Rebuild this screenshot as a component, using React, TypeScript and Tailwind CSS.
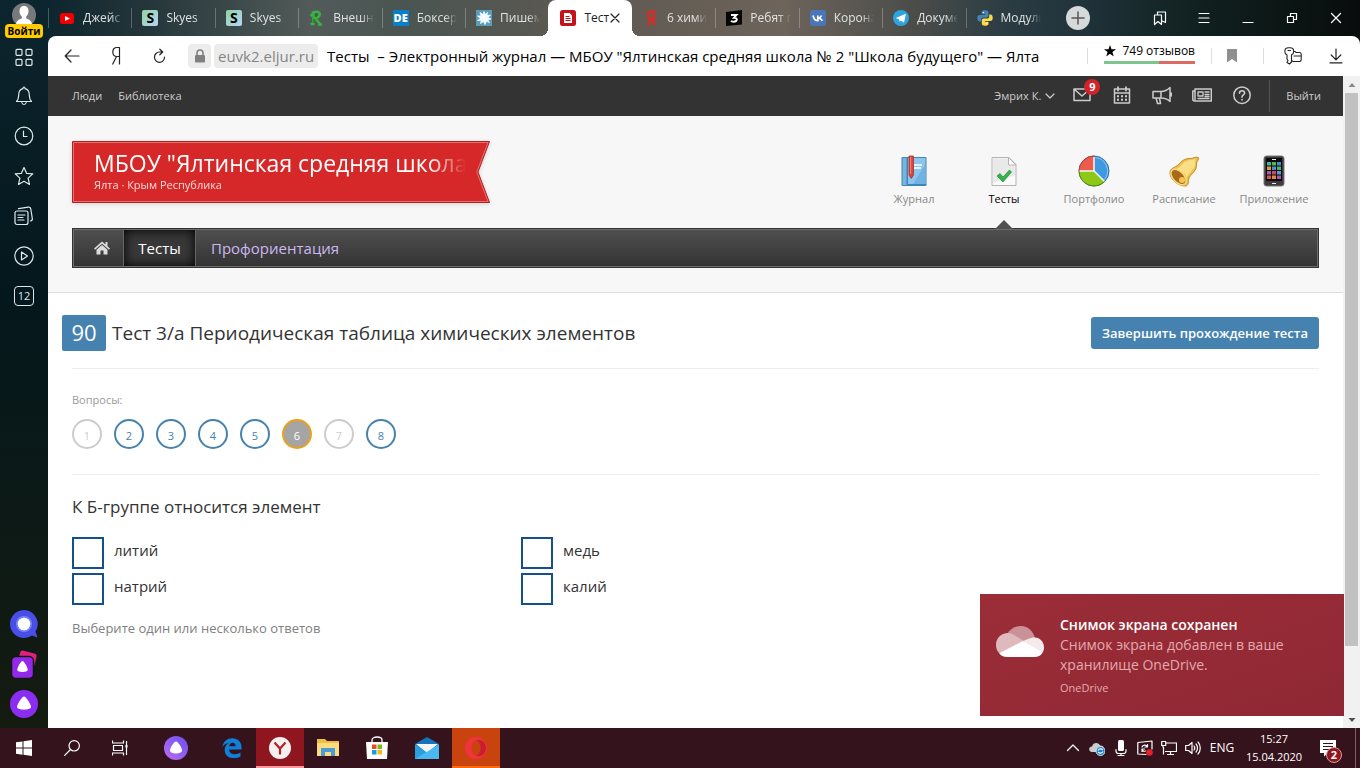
import type { ReactNode } from "react";

type IconProps = { size?: number; box?: string; children: ReactNode; className?: string };

function Line({ size = 20, box, children, className = "" }: IconProps) {
  return (
    <svg
      width={size}
      height={size}
      viewBox={box ?? `0 0 ${size} ${size}`}
      fill="none"
      stroke="currentColor"
      strokeWidth="1.2"
      strokeLinecap="round"
      strokeLinejoin="round"
      aria-hidden="true"
      className={`shrink-0 ${className}`}
    >
      {children}
    </svg>
  );
}

function Art({ size = 16, box, children, className = "" }: IconProps) {
  return (
    <svg width={size} height={size} viewBox={box ?? `0 0 ${size} ${size}`} aria-hidden="true" className={`shrink-0 ${className}`}>
      {children}
    </svg>
  );
}

const skyesIcon = (
  <span className="flex size-4 shrink-0 items-center justify-center rounded-xs bg-linear-to-br from-[#8fd4a0] to-[#b9d3f5] text-sm font-bold leading-4 text-black">S</span>
);

const tabs: { title: string; icon: ReactNode; active?: boolean }[] = [
  {
    title: "Джейс",
    icon: (
      <Art>
        <rect x="1" y="3" width="14" height="11" rx="2.5" fill="#f00000" />
        <path d="M6 6l5 2.500-5 2.500z" fill="#fff" />
      </Art>
    ),
  },
  { title: "Skyes", icon: skyesIcon },
  { title: "Skyes", icon: skyesIcon },
  {
    title: "Внешн",
    icon: (
      <Art>
        <path d="M4.500 14.500V3M3 3c5-2.500 8.500-1 7.500 2.300-.6 2-3 2.500-5 2.500M6.500 8.500l4.500 5.500M1.500 14h4M9 14.500h4M1.500 6l2-2" fill="none" stroke="#3cb043" strokeWidth="2.600" />
        <path d="M7 4v3M5 9v4" stroke="#1c6e26" strokeWidth="1.200" />
      </Art>
    ),
  },
  {
    title: "Боксер",
    icon: <span className="flex size-4 shrink-0 items-center justify-center bg-[#0a7fc9] text-[11px] font-extrabold leading-4 text-white">DE</span>,
  },
  {
    title: "Пишем",
    icon: (
      <Art>
        <rect width="16" height="16" fill="#5b9db8" />
        <path d="M8 1.500l1 3 2.500-2-.5 3 3.500-.5-2.500 2.500 3 1.500-3.200.7 1.700 3-3-1.400L9 14.500l-1.500-3-3 2 .8-3.200-3.800.2 3-2L1.500 6l3.500 0-1-3.500 3 2z" fill="#f4fbff" stroke="#f4fbff" strokeWidth=".8" />
      </Art>
    ),
  },
  {
    title: "Тест",
    active: true,
    icon: (
      <Art>
        <rect width="16" height="16" rx="2.500" fill="#c4141b" />
        <path d="M4 3h5.500L12 5.500V13H4z" fill="#fff" />
        <path d="M5.500 6.500h4M5.500 8.500h5M5.500 10.500h5" stroke="#c4141b" />
      </Art>
    ),
  },
  {
    title: "6 хими",
    icon: (
      <Art>
        <path d="M11 15.500V1.300H8.800C6 1.300 4.800 3 4.800 5s1.200 3.800 3.700 3.800H11M8.200 9l-3.600 6.500" fill="none" stroke="#e52620" strokeWidth="2.200" />
      </Art>
    ),
  },
  {
    title: "Ребят п",
    icon: (
      <Art>
        <path d="M0 2l16-2v14.500L0 16z" fill="#050505" />
        <path d="M5 5h5.500L8 7.700c4 0 3.500 4-.3 4-1.200 0-2.200-.3-2.700-.8" fill="none" stroke="#fff" strokeWidth="1.900" />
      </Art>
    ),
  },
  {
    title: "Корона",
    icon: (
      <Art>
        <rect width="16" height="16" rx="2.500" fill="#4a76b8" />
        <path d="M3 5.500c.8 3.500 2.300 5.200 4.800 5.200V5.500M8 8c2-.2 3-1.200 3.600-2.500M8.200 8c2 .1 3.200 1.300 4.300 2.700" fill="none" stroke="#fff" strokeWidth="1.700" />
      </Art>
    ),
  },
  {
    title: "Докуме",
    icon: (
      <Art>
        <circle cx="8" cy="8" r="8" fill="#2ca5dc" />
        <path d="M2.800 7.900l9.300-3.800c.5-.1.700.2.600.6l-1.500 7.300c-.1.500-.5.600-.9.300L7.900 10.500l-1.300 1.300-.4-2.400z" fill="#fff" />
      </Art>
    ),
  },
  {
    title: "Модуль",
    icon: (
      <Art>
        <path d="M8 .3c-3 0-3.300 1.200-3.300 2.200v1.700h3.500v.7H3C1.200 4.900.3 6 .3 8.200s1 3.200 2.300 3.200h1.500V9.600c0-1.300 1-2.200 2.200-2.200h3.500c1 0 1.700-.8 1.700-1.800V2.500C11.500 1 10.200.3 8 .3z" fill="#4483b8" />
        <path d="M8.200 15.700c3 0 3.300-1.200 3.300-2.200v-1.700H8v-.7h5.200c1.800 0 2.500-1.100 2.500-3.300s-1-3.200-2.300-3.200h-1.200v1.800c0 1.300-1 2.200-2.200 2.200H6.500c-1 0-1.700.8-1.700 1.800v3.100c0 1.500 1.200 2.200 3.400 2.200z" fill="#ffd845" />
        <circle cx="6.300" cy="2.500" r=".7" fill="#fff" />
        <circle cx="9.900" cy="13.500" r=".7" fill="#fff" />
      </Art>
    ),
  },
];

function Tabs() {
  return (
    <div role="tablist" className="grid h-9 min-w-0 flex-1 grid-cols-12">
      {tabs.map((tab, i) => {
        const divider = i > 0 && tabs[i - 1].active ? "border-transparent" : "border-white/25";
        return (
          <div
            key={i}
            role="tab"
            aria-selected={!!tab.active}
            className={
              tab.active
                ? "relative flex h-9 min-w-0 items-center rounded-t-lg bg-white px-3 text-[#222] before:absolute before:-left-2 before:bottom-0 before:size-2 before:bg-[radial-gradient(circle_at_0_0,transparent_8px,white_8px)] after:absolute after:-right-2 after:bottom-0 after:size-2 after:bg-[radial-gradient(circle_at_100%_0,transparent_8px,white_8px)]"
                : "flex h-9 min-w-0 items-center pr-2 text-[#dfe2e2]"
            }
          >
            {!tab.active && <span className={`mr-[10px] h-5 shrink-0 border-l ${divider}`} />}
            {tab.icon}
            <span className={`ml-2 min-w-0 flex-1 whitespace-nowrap text-xs leading-5 ${tab.active ? "" : "mask-r-from-70%"}`}>{tab.title}</span>
            {tab.active && (
              <button aria-label="Закрыть вкладку">
                <Line size={10}>
                  <path d="M1 1l8 8M9 1l-8 8" />
                </Line>
              </button>
            )}
          </div>
        );
      })}
    </div>
  );
}

function WindowControls() {
  return (
    <div className="flex w-[311px] shrink-0 items-center text-white">
      <button aria-label="Новая вкладка" className="ml-[17px] mr-12 flex size-6 items-center justify-center rounded-full bg-[#d5d9da] text-[#555]">
        <Line size={14}>
          <path d="M7 1v12M1 7h12" strokeWidth="1.500" />
        </Line>
      </button>
      <button aria-label="Коллекции" className="flex h-9 w-11 items-center justify-center">
        <Line size={16}>
          <path d="M2.500 5h7v9.500L6 11.500l-3.500 3zM5.500 5V2h8v10.500l-3.500-1.500" />
        </Line>
      </button>
      <button aria-label="Меню" className="flex h-9 w-11 items-center justify-center">
        <Line size={12}>
          <path d="M1 1.500h10M1 6h10M1 10.500h10" />
        </Line>
      </button>
      <button aria-label="Свернуть" className="flex h-9 w-11 items-center justify-center">
        <Line size={12}>
          <path d="M1 10.500h10" />
        </Line>
      </button>
      <button aria-label="Восстановить" className="flex h-9 w-11 items-center justify-center">
        <Line size={12}>
          <path d="M1.500 4.500h6v6h-6zM4.500 4.500v-3h6v6h-3" />
        </Line>
      </button>
      <button aria-label="Закрыть" className="flex h-9 w-11 items-center justify-center">
        <Line size={12}>
          <path d="M1.500 1.500l9 9M10.500 1.500l-9 9" />
        </Line>
      </button>
    </div>
  );
}

function AddressBar() {
  return (
    <div className="flex h-10 shrink-0 items-center rounded-t-lg bg-white pl-4 text-[#222]">
      <button aria-label="Назад" className="flex w-4 justify-center">
        <Line size={16}>
          <path d="M15 8H1.500M7 2L1.200 8 7 14" />
        </Line>
      </button>
      <button aria-label="Яндекс" className="ml-7 flex w-4 justify-center">
        <Line size={20}>
          <path d="M13.500 18.500v-17h-2.500C8 1.500 6.800 3.500 6.800 6s1.200 4.500 4.200 4.500h2.500M10.500 10.500l-4 8" strokeLinecap="butt" />
        </Line>
      </button>
      <button aria-label="Обновить" className="ml-[27px] flex w-4 justify-center">
        <Line size={16}>
          <path d="M11.500 4H8.500a5 5.200 0 1 0 5 5.200M8.800 1.200l2.900 2.800-2.900 2.800" />
        </Line>
      </button>
      <button aria-label="Защищённое соединение" className="ml-[21px] flex h-6 w-[23px] items-center justify-center rounded bg-[#ececec]">
        <Art size={14}>
          <path d="M4 6.500V4a3 3 0 0 1 6 0v2.500" fill="none" stroke="#808080" strokeWidth="1.600" />
          <rect x="2" y="6" width="10" height="7.500" rx="1" fill="#808080" />
        </Art>
      </button>
      <a href="#site" className="ml-[3px] flex h-6 items-center rounded bg-[#ececec] px-1 text-[15px] leading-6 text-[#858585]">
        euvk2.eljur.ru
      </a>
      <button className="ml-[9px] min-w-0 flex-1 whitespace-pre text-left text-[15px] leading-6 text-black">
        {'Тесты  – Электронный журнал — МБОУ "Ялтинская средняя школа № 2 "Школа будущего" — Ялта'}
      </button>
      <div className="ml-4 flex shrink-0 items-center">
        <span className="h-4 border-l border-[#ddd]" />
        <a href="#reviews" className="ml-4 w-[91px] whitespace-nowrap pb-[5px] text-xs leading-4 text-black">
          <span className="flex items-center justify-between">
            <Art size={12}>
              <path d="M6 0l1.500 4.200H12L8.400 6.900l1.400 4.500L6 8.700l-3.800 2.700 1.400-4.500L0 4.200h4.500z" />
            </Art>
            749 отзывов
          </span>
          <span className="mt-0.5 flex h-[3px]">
            <span className="w-3/5 bg-[#7dc58d]" />
            <span className="w-2/5 bg-[#dd6a63]" />
          </span>
        </a>
        <span className="ml-4 h-4 border-l border-[#ddd]" />
        <button aria-label="Закладка" className="ml-[13px]">
          <Art size={14}>
            <path d="M2 0h10v13.500L7 10l-5 3.500z" fill="#8f8f8f" />
          </Art>
        </button>
        <span className="ml-6 h-4 border-l border-[#ddd]" />
        <button aria-label="Пароли" className="ml-5">
          <Line size={18}>
            <path d="M3 8C1.500 7.200.8 6 .8 4.300.8 2 2 .8 4.500.8H6c2.500 0 3.700 1.300 3.700 3.500 0 1.700-.8 3-2.200 3.700v7L5.500 17 3 15.500l1-2-1-1.500zM4 3.500h2.500M9.700 4.500h1c.8 0 1 .5 1.300 1h3.300c1.200 0 1.900.6 1.900 1.700v5.600c0 1.100-.6 1.700-1.700 1.700H9.500c-1.200 0-2-.6-2-1.700M10 9H17" strokeWidth="1.100" />
          </Line>
        </button>
        <button aria-label="Загрузки" className="ml-[26px] mr-4">
          <Line size={16}>
            <path d="M8 1v10.500M3.200 7L8 11.800 12.800 7M2 14.800h12" />
          </Line>
        </button>
      </div>
    </div>
  );
}

const sideItems: { label: string; icon: ReactNode }[] = [
  { label: "Табло", icon: <path d="M1.500 3a1 1 0 0 1 1-1h4a1 1 0 0 1 1 1v4a1 1 0 0 1-1 1h-4a1 1 0 0 1-1-1zM11.500 3a1 1 0 0 1 1-1h4a1 1 0 0 1 1 1v4a1 1 0 0 1-1 1h-4a1 1 0 0 1-1-1zM1.500 13a1 1 0 0 1 1-1h4a1 1 0 0 1 1 1v4a1 1 0 0 1-1 1h-4a1 1 0 0 1-1-1zM11.500 13a1 1 0 0 1 1-1h4a1 1 0 0 1 1 1v4a1 1 0 0 1-1 1h-4a1 1 0 0 1-1-1z" transform="translate(.5 1.3)" /> },
  { label: "Уведомления", icon: <path d="M2.500 15.500c2-2 2.200-3.500 2.200-6.500 0-3.500 2-5.800 4.300-6.300C9 1.500 9.400 1 10 1s1 .5 1 1.700c2.300.5 4.300 2.800 4.300 6.300 0 3 .2 4.500 2.200 6.500zM7.800 16.500c.3 1.500 1.100 2 2.200 2s1.900-.5 2.200-2" /> },
  { label: "История", icon: <><circle cx="10" cy="10" r="8.800" /><path d="M9.500 5v5.500H13" /></> },
  { label: "Избранное", icon: <path d="M10 1.500l2.600 5.800 6.200.6-4.700 4.200 1.400 6.300L10 15.200l-5.500 3.200 1.400-6.300L1.200 7.900l6.200-.6z" /> },
  { label: "Коллекции", icon: <><rect x="1" y="5" width="13" height="13.500" rx="2" /><path d="M4.500 2.600l9.800-1.400c1.500-.2 2.200.5 2.500 1.800l1.500 9.500c.2 1.200-.4 2.200-1.800 2.500M4 9h7M4 11.500h5M4 14h6" /></> },
  { label: "Видео", icon: <><circle cx="10" cy="10" r="9.200" /><path d="M7.500 6v8l6-4z" /></> },
];

function Sidebar() {
  return (
    <aside className="flex w-12 shrink-0 flex-col items-center bg-linear-to-b from-[#0d252e] via-[#04171c] via-40% to-[#141b10] text-[#dfe9ea]">
      <button className="flex h-9 shrink-0 flex-col items-center pt-[3px]">
        <Art size={24} className="-mb-[3px]">
          <circle cx="12" cy="12" r="12" fill="#77797b" />
          <path d="M12 3c-3 0-4.500 2-4.500 5 0 2.500.9 4.500 2.300 5.500v2C7.500 16.500 5 17 4 20.500 6 23 9 24 12 24s6-1 8-3.500c-1-3.500-3.500-4-5.800-5v-2c1.400-1 2.300-3 2.300-5.500 0-3-1.500-5-4.500-5z" fill="#fff" />
        </Art>
        <span className="z-10 rounded bg-[#fc0] px-[3px] text-[10px] font-bold leading-[14px] text-black">Войти</span>
      </button>
      {sideItems.map((item) => (
        <button key={item.label} aria-label={item.label} className="flex h-10 w-12 shrink-0 items-center justify-center">
          <Line size={20}>{item.icon}</Line>
        </button>
      ))}
      <button className="mt-[10px] flex size-5 shrink-0 items-center justify-center rounded border border-[#dfe9ea] text-[11px] leading-4">12</button>
      <div className="flex-1" />
      <button aria-label="Мессенджер" className="flex h-10 shrink-0 items-center">
        <Art size={28}>
          <path d="M14 0a14 14 0 1 0 8 25.500l5.500 2-2-6A14 14 0 0 0 14 0z" fill="#4a4ee8" />
          <circle cx="14" cy="14" r="8" fill="#8aa4ff" opacity=".65" />
          <circle cx="14" cy="14" r="6.300" fill="#fff" />
        </Art>
      </button>
      <button aria-label="Сервисы" className="flex h-10 shrink-0 items-center">
        <Art size={28}>
          <rect x="9" y="2" width="17" height="14" rx="3" fill="#e0207f" transform="rotate(14 18 8)" />
          <rect x="1.500" y="6.500" width="22" height="22" rx="4.500" fill="#9328ea" stroke="#10170f" strokeWidth="1.5" />
          <path d="M12.500 11c1.500 0 5.300 6.500 5.300 9s-10.600 2.500-10.600 0S11 11 12.500 11z" fill="#fff" />
        </Art>
      </button>
      <button aria-label="Алиса" className="mb-1 flex h-10 shrink-0 items-center">
        <Art size={28}>
          <circle cx="14" cy="14" r="14" fill="#8b2df0" />
          <path d="M14 6.500c2 0 7 8 7 10.500 0 3.500-14 3.500-14 0 0-2.500 5-10.500 7-10.500z" fill="#fff" />
        </Art>
      </button>
    </aside>
  );
}

function SiteTopBar() {
  return (
    <div className="flex h-10 items-center bg-[#333] pl-6 pr-[22px] text-[11px] leading-4 text-[#ccc]">
      <a href="#people">Люди</a>
      <a href="#library" className="ml-4">Библиотека</a>
      <div className="flex-1" />
      <button className="flex items-center gap-1">
        Эмрих К.
        <Line size={10}>
          <path d="M1 3l4 4 4-4" />
        </Line>
      </button>
      <a href="#mail" aria-label="Сообщения: 9" className="relative ml-[17px]">
        <Line size={20}>
          <path d="M2 3h16v11.500H2zM2.500 3.500L10 10l7.500-6.500" strokeWidth="1.500" />
        </Line>
        <span className="absolute -top-[7px] left-3 flex size-4 items-center justify-center rounded-full bg-[#d2232a] text-[11px] font-bold text-white">9</span>
      </a>
      <a href="#calendar" aria-label="Календарь" className="ml-5">
        <Line size={20}>
          <path d="M2.500 3h15v14h-15zM2.500 7h15" strokeWidth="1.500" />
          <path d="M6 1.200V4.500M14 1.200V4.500" strokeWidth="1.800" />
          <path d="M5 10.300h10M5 13.700h10" strokeDasharray="2 2" strokeLinecap="butt" strokeWidth="2" />
        </Line>
      </a>
      <a href="#news" aria-label="Объявления" className="ml-5">
        <Line size={20}>
          <path d="M1 5.500h8c4 0 7-2 9-4v14c-2-2-5-3.500-9-3.500H1zM9 5.500V12M4 12l1.500 5.500h3l-1-5.500M19.300 7v3" strokeWidth="1.500" />
        </Line>
      </a>
      <a href="#feed" aria-label="Новости" className="ml-5">
        <Line size={20}>
          <path d="M3 3h16.300v12H2.500C1 15 .8 14 .8 13V5H3zM3 5v8.500" strokeWidth="1.500" />
          <path d="M6 6h5v4H6zM13 6h4M13 8.500h4M6 12.500h11M13 10.500h4" strokeWidth="1.300" />
        </Line>
      </a>
      <a href="#help" aria-label="Помощь" className="ml-5">
        <Line size={20}>
          <circle cx="10" cy="9.200" r="8.200" strokeWidth="1.500" />
          <path d="M7.500 7.200c0-1.800 1.200-2.500 2.500-2.500s2.600.7 2.600 2.300c0 2-2.600 2-2.600 4.200M10 13.500v.4" strokeWidth="1.600" />
        </Line>
      </a>
      <span className="ml-[17px] h-8 border-l border-[#555]" />
      <a href="#logout" className="ml-4">Выйти</a>
    </div>
  );
}

const sections: { label: string; active?: boolean; icon: ReactNode }[] = [
  {
    label: "Журнал",
    icon: (
      <>
        <rect x="3.500" y="2" width="25" height="29" rx="1" fill="#3f86b8" />
        <rect x="4.500" y="3" width="4" height="27" fill="#78b4dc" />
        <rect x="10" y="3" width="17.500" height="26" fill="#8cc6ee" />
        <path d="M15 29L27.500 9v20z" fill="#72b2e2" />
        <path d="M16 10h8M16 13h7" stroke="#fff" strokeWidth="1.500" />
        <path d="M11 1h4.500v19l-2.200 3.500L11 20z" fill="#de4138" stroke="#a92a2a" strokeWidth=".7" />
        <path d="M12.700 2v17" stroke="#f58b7d" />
      </>
    ),
  },
  {
    label: "Тесты",
    active: true,
    icon: (
      <>
        <path d="M4 2.500h17l7 7v21H4z" fill="#fafafa" stroke="#b4b4b4" />
        <path d="M5 3.500h15v7h7v10L5 28z" fill="#e9e9e9" />
        <path d="M20.500 2.500v7.500H28z" fill="#fff" stroke="#b4b4b4" />
        <path d="M9 21l3-2.500 3 3.500 6.500-7 2 2L15 27z" fill="#35b24a" stroke="#239236" strokeWidth=".7" />
      </>
    ),
  },
  {
    label: "Портфолио",
    icon: (
      <>
        <circle cx="16" cy="16" r="15" fill="#3d9ade" stroke="#2c6fa8" />
        <path d="M16 16V1A15 15 0 0 0 1 16z" fill="#ec5b4c" stroke="#b33c36" />
        <path d="M16 16H1a15 15 0 0 0 25.600 10.600z" fill="#8cc815" stroke="#57870d" />
        <path d="M16 2v14l10.300 10.300M16 16H1.500" stroke="#fff" strokeWidth="1.500" fill="none" />
        <path d="M17.500 2.500a13.500 13.500 0 0 1 9 22" stroke="#91cdf6" fill="none" />
      </>
    ),
  },
  {
    label: "Расписание",
    icon: (
      <>
        <path d="M30.500 2.500c-3-.8-4 0-7 1-5-.5-9 1.500-12 5C9 11.500 6 12 3.500 14c-2 2-2 5-.5 8 2.500 5 8 8.500 13.500 9 3 .2 4-2 4-5.500 0-4 3.500-6 6-9.500s2-6 2-8c.5-1.500 2-3 2-5.500z" fill="#efc04c" stroke="#bd8b23" />
        <path d="M27.500 4.500C20 4 15 7.500 12.500 11c-1 1.500-3 2.500-4.500 3.500 6 1 10 5 11 8.500 1-5 7-8 8-13z" fill="#fbdf86" />
        <ellipse cx="10.500" cy="22" rx="5.500" ry="9.300" transform="rotate(-44 10.500 22)" fill="#a96b1b" stroke="#f6d981" strokeWidth="1.500" />
        <circle cx="14" cy="25" r="3" fill="#f2c554" />
      </>
    ),
  },
  {
    label: "Приложение",
    icon: (
      <>
        <rect x="6" y="1" width="20" height="30" rx="2.500" fill="#3c3c3c" stroke="#777" />
        <rect x="8" y="3" width="16" height="23" fill="#0c0c0c" />
        <path d="M14 4.500h4M14 28.500h4" stroke="#eee" />
        {["#4bb3a5", "#56b44e", "#3a91d0", "#d2a433", "#4b8fd1", "#46b66a", "#a35bc0", "#d0485b", "#5a9ad8", "#d5574d", "#e68937", "#a855b5"].map((color, i) => (
          <rect key={i} x={9 + (i % 3) * 5} y={7 + Math.floor(i / 3) * 4.5} width="4" height="3.5" fill={color} />
        ))}
      </>
    ),
  },
];

function SiteHeader() {
  return (
    <header className="border-b border-[#ddd] bg-[#f7f7f7] px-6 pb-6 pt-[25px]">
      <div className="flex items-start justify-between">
        <a href="#school" className="relative block h-[62px] w-[418px] pl-[22px] pt-2 text-white drop-shadow-sm">
          <svg className="absolute inset-0 size-full" viewBox="0 0 418 62" preserveAspectRatio="none" aria-hidden="true">
            <path d="M.5.500h417L406 31l11.500 30.500H.5z" fill="#d62828" stroke="#ae2227" />
            <path d="M1.500 1.500h414.500L404.800 31 416 60.500H1.500z" fill="none" stroke="#e57070" />
          </svg>
          <span className="relative block w-[372px] whitespace-nowrap text-[23px] leading-7 mask-r-from-90%">МБОУ "Ялтинская средняя школа</span>
          <span className="relative block text-[11px] leading-4 text-[#ffd9d9]">Ялта · Крым Республика</span>
        </a>
        <nav className="flex h-[87px] pt-[14px] text-[11px] leading-4 text-[#888]">
          {sections.map((s) => (
            <a key={s.label} href="#section" className={`relative flex w-[90px] flex-col items-center ${s.active ? "text-black" : ""}`}>
              <Art size={32}>{s.icon}</Art>
              <span className="mt-1">{s.label}</span>
              {s.active && (
                <Art size={18} className="absolute -bottom-[10px] z-10">
                  <path d="M0 9l9-9 9 9z" fill="#505050" />
                </Art>
              )}
            </a>
          ))}
        </nav>
      </div>
      <nav className="flex h-10 items-stretch border border-[#333] bg-linear-to-b from-[#505050] to-[#333] text-[15px] leading-5 text-white inset-ring inset-ring-[#6c6c6c]">
        <a href="#home" aria-label="Главная" className="flex w-[51px] items-center justify-center border-r border-[#666] pl-2 text-[#ddd]">
          <Art size={16}>
            <path d="M8 1.500L0 8.500l1 1.200 7-6 7 6 1-1.200-2.500-2.200V2h-2v2.500z" fill="currentColor" />
            <path d="M8 5l-5.500 4.700v4.800h4v-4h3v4h4V9.700z" fill="currentColor" />
          </Art>
        </a>
        <a href="#tests" className="my-px flex w-[72px] items-center justify-center border-r border-[#666] bg-[#383838] inset-shadow-[0_0_12px_#000]">Тесты</a>
        <a href="#career" className="ml-[15px] flex items-center text-[#ccb8f2]">Профориентация</a>
      </nav>
    </header>
  );
}

const questions = [1, 2, 3, 4, 5, 6, 7, 8];
const answers = ["литий", "медь", "натрий", "калий"];

function questionStyle(n: number) {
  if (n === 6) return "border-[#e8a317] bg-[#a5a5a5] text-white";
  if (n === 1 || n === 7) return "border-[#ccc] text-[#ccc]";
  return "border-[#4682ae] text-[#4682ae]";
}

function TestPage() {
  return (
    <main className="px-6 text-[#333]">
      <div className="flex h-[76px] items-center border-b border-[#eee] pt-1">
        <span className="-ml-[10px] flex h-9 w-11 items-center justify-center rounded-xs bg-[#4682b0] text-[22px] text-white">90</span>
        <h1 className="ml-[6px] flex-1 whitespace-nowrap text-[19px] leading-6">Тест 3/а Периодическая таблица химических элементов</h1>
        <button className="h-8 w-[228px] rounded-[3px] bg-[#4682b0] text-[13px] font-semibold leading-5 text-white">Завершить прохождение теста</button>
      </div>
      <section className="border-b border-[#eee] pb-[25px] pt-[23px]">
        <p className="text-[11px] leading-4 text-[#999]">Вопросы:</p>
        <div className="mt-[11px] flex gap-3">
          {questions.map((n) => (
            <button key={n} className={`flex size-[30px] items-center justify-center rounded-full border-2 pt-1 text-[11px] leading-4 ${questionStyle(n)}`}>
              {n}
            </button>
          ))}
        </div>
      </section>
      <fieldset aria-labelledby="question" className="pt-5">
        <h2 id="question" className="text-[17px] leading-6">К Б-группе относится элемент</h2>
        <div className="mt-[18px] grid grid-cols-[449px_1fr] gap-y-1">
          {answers.map((a) => (
            <label key={a} className="flex h-8 gap-[10px] text-[15px] leading-[26px]">
              <input type="checkbox" className="size-8 appearance-none border-2 border-[#154f8c] bg-white" />
              {a}
            </label>
          ))}
        </div>
        <p className="mt-[13px] text-[13px] leading-5 text-[#808080]">Выберите один или несколько ответов</p>
      </fieldset>
    </main>
  );
}

function Scrollbar() {
  return (
    <div className="flex w-[17px] shrink-0 flex-col items-center bg-[#f1f1f1]" aria-hidden="true">
      <Art size={16}>
        <path d="M4.500 11L8 7l3.500 4z" fill="#8a8a8a" />
      </Art>
      <div className="mt-px w-[13px] grow-[552] bg-[#c1c1c1]" />
      <div className="grow-[66]" />
      <Art size={16}>
        <path d="M4.500 6L8 10l3.500-4z" fill="#505050" />
      </Art>
    </div>
  );
}

function Toast() {
  return (
    <div role="status" className="absolute bottom-3 right-4 flex h-[122px] w-[364px] bg-linear-to-br from-[#9b2d37] to-[#8f2834] pl-4 pt-[21px] text-[#e5a9ae]">
      <svg width="48" height="32" viewBox="0 0 48 32" aria-hidden="true" className="mt-[11px] shrink-0">
        <path d="M11 8C14 3 19 0 25 0c7 0 12 5 14 12l-12 4z" fill="#cb9198" />
        <path d="M12 7C5 7 0 12 0 19c0 3 1 6 3 8l25-12-10-6c-2-1.300-4-2-6-2z" fill="#dfb9bd" />
        <path d="M3 27l24-12 13 3 8 3c0 6-4 10-9 10H11c-3.500 0-6.500-1.500-8-4z" fill="#fff" />
        <path d="M27 15l5-2c2-.9 4-1.500 7-1.500 5 0 9 4.500 9 9.500L46 26z" fill="#f6e9ea" />
      </svg>
      <div className="ml-4 text-sm leading-5">
        <p className="font-semibold text-white">Снимок экрана сохранен</p>
        <p className="w-[250px]">Снимок экрана добавлен в ваше хранилище OneDrive.</p>
        <p className="mt-[5px] text-[11px] leading-4">OneDrive</p>
      </div>
    </div>
  );
}

function Taskbar() {
  return (
    <footer className="flex h-10 shrink-0 items-stretch bg-[#35131c] text-white">
      <button aria-label="Пуск" className="flex w-12 items-center justify-center">
        <Art size={16}>
          <path d="M0 2.300L6.500 1.400v6.200H0zM7.500 1.200L16 0v7.600H7.500zM0 8.500h6.500v6.200L0 13.800zM7.500 8.500H16V16l-8.500-1.200z" fill="#fff" />
        </Art>
      </button>
      <button aria-label="Поиск" className="flex w-12 items-center justify-center">
        <Line size={16}>
          <circle cx="10.200" cy="5.800" r="5.200" />
          <path d="M6.500 9.500L.7 15.300" />
        </Line>
      </button>
      <button aria-label="Представление задач" className="flex w-12 items-center justify-center">
        <Line size={16}>
          <path d="M.5.500v2.500h11V.5M.5 15.500V13h11v2.500M1.500 5.500h9v5h-9zM14.500 1v14" strokeLinecap="butt" />
          <path d="M13.500 5h2v2.500h-2z" fill="#fff" stroke="none" />
        </Line>
      </button>
      <button aria-label="Алиса" className="flex w-16 items-center justify-center">
        <Art size={24}>
          <defs>
            <linearGradient id="alice" x1="0" y1="1" x2="1" y2="0">
              <stop offset="0" stopColor="#c26cf2" />
              <stop offset="1" stopColor="#6450ef" />
            </linearGradient>
          </defs>
          <circle cx="12" cy="12" r="12" fill="url(#alice)" />
          <path d="M12 5.500c2 0 6 6.300 6 9 0 4-12 4-12 0 0-2.700 4-9 6-9z" fill="#fff" />
        </Art>
      </button>
      <button aria-label="Edge" className="flex w-12 items-center justify-center">
        <Art size={20}>
          <path d="M.5 9C1.300 3.500 5 .3 10.300.3c5.500 0 9.200 3.700 9.200 9v2.200H7c.2 3 2.300 4.700 5.800 4.700 2.200 0 4-.6 5.700-1.600v4c-2 1.100-4 1.500-6.500 1.500-6 0-9.300-3.300-9.300-8.400 0-3.200 1.800-5.700 4.500-7C4.500 5 2 6.500.5 9zm6.700-.7h6.500C13.600 6 12.500 4.800 10.600 4.800S7.600 6.100 7.200 8.300z" fill="#0f80d8" />
        </Art>
      </button>
      <button aria-label="Яндекс.Браузер" className="flex w-12 items-center justify-center border-b-2 border-[#f79a9f] bg-[#8f151e] pt-0.5">
        <Art size={22}>
          <circle cx="11" cy="11" r="11" fill="#f3f0ef" />
          <path d="M5.500 5.500l5.500 6 5.500-6M11 11v6.500" fill="none" stroke="#b5202a" strokeWidth="2.200" />
        </Art>
      </button>
      <button aria-label="Проводник" className="flex w-12 items-center justify-center">
        <Art size={22}>
          <path d="M0 2h8l2 2h12v15H0z" fill="#f0bc42" />
          <path d="M0 6h22v13H0z" fill="#fbdc81" />
          <path d="M4 19v-8h14v8h-4v-4H8v4z" fill="#4c9bd4" />
        </Art>
      </button>
      <button aria-label="Магазин" className="flex w-[50px] items-center justify-center">
        <Art size={24}>
          <path d="M7 7V4c0-4 10-4 10 0v3" fill="none" stroke="#fff" strokeWidth="1.300" />
          <path d="M1 6h22l-1 17H2z" fill="#fff" />
          <path d="M7 8.500h4.500V13H7z" fill="#e84b23" />
          <path d="M12.500 8.500H17V13h-4.500z" fill="#7db718" />
          <path d="M7 14h4.500v4.500H7z" fill="#119de8" />
          <path d="M12.500 14H17v4.500h-4.500z" fill="#f6ba13" />
        </Art>
      </button>
      <button aria-label="Почта" className="flex w-[50px] items-center justify-center">
        <Art size={24}>
          <path d="M0 8l12-7 12 7v14H0z" fill="#1574be" />
          <path d="M1 8h22l-11 9z" fill="#f5f8fa" />
          <path d="M0 8.500l12 8V23H0z" fill="#2c9fe1" />
          <path d="M24 8.500L0 23h24z" fill="#4ab9f2" />
        </Art>
      </button>
      <button aria-label="Opera" className="flex w-12 items-center justify-center border-b-2 border-[#fb6a0a] bg-[#c9430f] pt-0.5">
        <Art size={24}>
          <path d="M12 1a11 11 0 1 0 0 22 11 11 0 0 0 0-22zm0 3.500c2.600 0 4.500 3.300 4.500 7.500s-1.900 7.500-4.500 7.500S7.500 16.200 7.500 12 9.400 4.500 12 4.500z" fill="#f13340" fillRule="evenodd" />
          <path d="M12 4.500c2.600 0 4.500 3.300 4.500 7.500s-1.900 7.500-4.500 7.500c3 2.500 10-.5 10-7.500S15 2 12 4.500z" fill="#c91f2c" />
        </Art>
      </button>
      <div className="flex-1" />
      <div className="flex items-center">
        <button aria-label="Скрытые значки" className="flex w-6 justify-center">
          <Line size={14}>
            <path d="M1.500 9.500L7 4l5.500 5.500" />
          </Line>
        </button>
        <button aria-label="OneDrive" className="flex w-6 justify-center">
          <Art size={16}>
            <path d="M3 12c-4-.5-3.500-5.500 0-5.500C4 2 10 2 11 5.500c3 0 4 1.500 4 3.500l-5 3z" fill="#ccc" />
            <circle cx="11.500" cy="11" r="4.500" fill="#1d7fc9" stroke="#d5e8f5" />
            <path d="M9 10.500c1-2 4-2 4.800-.5M14 11.500c-1 2-4 2-4.800.5" stroke="#fff" strokeWidth="1.200" fill="none" />
          </Art>
        </button>
        <button aria-label="Микрофон" className="flex w-6 justify-center">
          <Line size={16}>
            <rect x="5" y="0" width="6" height="11" rx="1.500" fill="#fff" stroke="none" />
            <path d="M3 9.500v1.500c0 1.500 1 2.500 2.500 2.500h5c1.500 0 2.500-1 2.500-2.500V9.500M8 13.500v2M5 15.500h6" />
          </Line>
        </button>
        <button aria-label="Обновление" className="flex w-6 justify-center">
          <Line size={16}>
            <path d="M9 14.500L.8 14V2.500L15 1v8" />
            <path d="M5 7c.8-2.500 4.500-2.500 5-.5M10.500 4.500V7H8M5 11.500V9h2.500M5 9.500c.5 1.500 2 2 3.500 1.500" />
            <circle cx="12.500" cy="12.500" r="3.300" fill="#e8202c" stroke="none" />
          </Line>
        </button>
        <button aria-label="Сеть" className="flex w-6 justify-center">
          <Line size={16}>
            <path d="M5 3h10.500v8.500H4M2.500 7v7.500M9.500 11.500v3M6 14.500h7M.7 1.500h4v4h-4zM2 5.500v2" strokeLinecap="butt" />
          </Line>
        </button>
        <button aria-label="Громкость" className="flex w-6 justify-center">
          <Line size={16}>
            <path d="M.7 5.500h2.800L7 2.500v11l-3.500-3H.7zM9 6c.8 1 .8 3 0 4M11 4c2 2 2 6 0 8M13 2c3 3 3 9 0 12" />
          </Line>
        </button>
        <button className="w-[34px] text-center text-xs leading-4">ENG</button>
        <button className="ml-1 w-[62px] whitespace-nowrap text-center text-[11px] leading-[18px]">
          <span className="block">15:27</span>
          <span className="block">15.04.2020</span>
        </button>
        <button aria-label="Уведомления: 2" className="relative ml-1 flex w-[38px] justify-center">
          <Art size={18}>
            <path d="M1 1h16v13H9l-4 3.500V14H1z" fill="#fff" />
            <path d="M4 4.500h10M4 7.500h10M4 10.500h7" stroke="#35131c" />
          </Art>
          <span className="absolute left-[17px] top-2 flex size-4 items-center justify-center rounded-full border border-[#d99] bg-[#8f151e] text-[11px] font-bold leading-3">2</span>
        </button>
        <span className="ml-2 mr-1 h-10 border-l border-[#7a6268]" />
      </div>
    </footer>
  );
}

export default function App() {
  return (
    <div className="flex h-screen flex-col overflow-hidden font-['Open_Sans','Noto_Sans',sans-serif]">
      <div className="relative flex min-h-0 flex-1">
        <Sidebar />
        <div className="flex min-w-0 flex-1 flex-col bg-[linear-gradient(90deg,#0d252e_0%,#26373b_8%,#525b59_20%,#4a5552_27%,#5f5951_42%,#6d645b_56%,#4b4d4a_66%,#2b3c43_73%,#20323a_79%,#10201f_88%,#080c0c_100%)]">
          <div className="flex h-9 shrink-0">
            <Tabs />
            <WindowControls />
          </div>
          <AddressBar />
          <div className="flex min-h-0 flex-1 bg-white">
            <div className="min-w-0 flex-1 overflow-hidden">
              <SiteTopBar />
              <SiteHeader />
              <TestPage />
            </div>
            <Scrollbar />
          </div>
        </div>
        <Toast />
      </div>
      <Taskbar />
    </div>
  );
}
